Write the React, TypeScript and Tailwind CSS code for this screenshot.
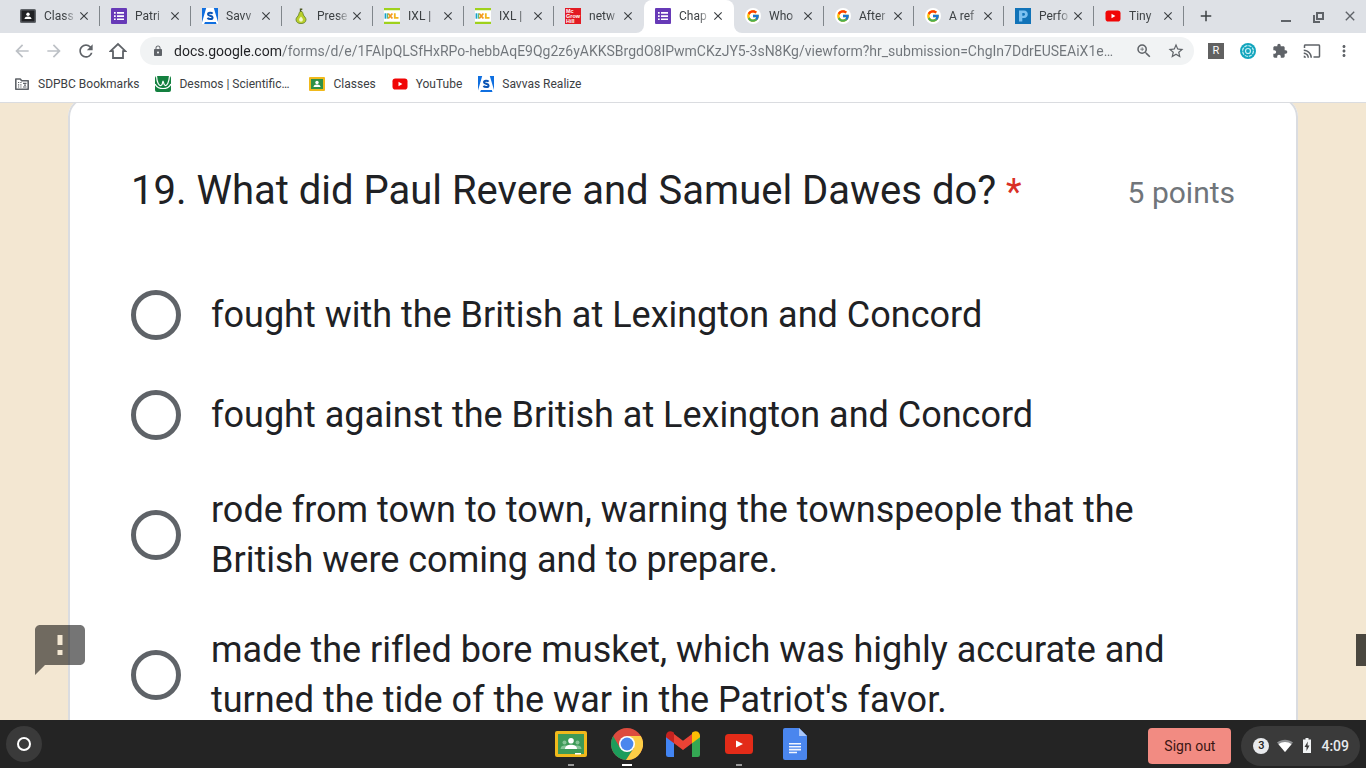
import React, { useState } from "react";
import {
  MdAdd,
  MdArrowBack,
  MdArrowForward,
  MdCast,
  MdClose,
  MdExtension,
  MdLock,
  MdMoreVert,
  MdRefresh,
  MdStarBorder,
  MdZoomIn,
} from "react-icons/md";
import { FcGoogle } from "react-icons/fc";

type IconProps = { className?: string };

function ClassDarkIcon() {
  return (
    <svg viewBox="0 0 16 16" className="size-4 shrink-0">
      <rect y="1" width="16" height="14" rx="1.5" fill="#5f6368" />
      <rect x="1.5" y="2.5" width="13" height="11" fill="#202124" />
      <circle cx="8" cy="6.3" r="1.7" fill="#fff" />
      <path d="M4.5 11c0-1.7 1.6-2.5 3.5-2.5s3.5.8 3.5 2.5z" fill="#fff" />
    </svg>
  );
}

function FormsIcon() {
  return (
    <svg viewBox="0 0 16 16" className="size-4 shrink-0">
      <rect width="16" height="16" rx="1" fill="#673ab7" />
      <path
        d="M3 4h1.7v1.7H3zM6 4h7v1.7H6zM3 7.2h1.7v1.7H3zM6 7.2h7v1.7H6zM3 10.4h1.7v1.7H3zM6 10.4h7v1.7H6z"
        fill="#fff"
      />
    </svg>
  );
}

function SavvasIcon() {
  return (
    <svg viewBox="0 0 16 16" className="size-4 shrink-0">
      <rect width="16" height="16" fill="#0f6fe0" />
      <path d="M4.200 0h7.600L16 14v2h-1.500l-.7-2H3l-.9 2H0v-1.500z" fill="#fff" />
      <path
        d="M10.600 5.700C9.600 4.500 6 4.300 6 6.200c0 1.900 4.600 1 4.600 3.200 0 2.200-3.800 2-5.200.6"
        fill="none"
        stroke="#0b55b5"
        strokeWidth="2"
      />
      <path d="M8 14h6v2H8z" fill="#0f6fe0" />
    </svg>
  );
}

function PearIcon() {
  return (
    <svg viewBox="0 0 16 16" className="size-4 shrink-0">
      <path
        d="M8 3.300c1.800 0 1.900 2.200 2.400 3.700.5 1.400 2.600 2.400 2.600 4.600 0 2.600-2.200 4-5 4s-5-1.400-5-4c0-2.200 2.100-3.200 2.600-4.600.5-1.500.6-3.700 2.400-3.700z"
        fill="#b9cf2c"
        stroke="#5f7d22"
        strokeWidth=".8"
      />
      <path d="M7.500 3.500V1.200h1.800" stroke="#4e5a24" fill="none" strokeWidth="1.400" />
      <path d="M8 8.500c1.200 1.500 1.900 2.200 1.900 3.300a1.900 1.900 0 0 1-3.800 0c0-1.100.7-1.800 1.900-3.300z" fill="#f3f7cf" />
    </svg>
  );
}

function IxlIcon() {
  return (
    <svg viewBox="0 0 16 16" className="size-4 shrink-0">
      <rect width="16" height="16" fill="#fff" />
      <path d="M0 0h16v2.300H0zM0 13.700h16V16H0z" fill="#9fd11c" />
      <path d="M1.500 5.300v5.400" stroke="#16a0c8" strokeWidth="1.800" />
      <path d="m4.200 5.500 4.200 5M8.400 5.500l-4.200 5" stroke="#f39a1e" strokeWidth="1.800" />
      <path d="M10.800 5.300v4.500h3.700" stroke="#f2b51d" strokeWidth="1.800" fill="none" />
      <path d="M3.600 5.300v5.400" stroke="#4fb56b" strokeWidth="1" />
    </svg>
  );
}

function McGrawIcon() {
  return (
    <svg viewBox="0 0 16 16" className="size-4 shrink-0">
      <rect width="16" height="16" fill="#e21a23" />
      <g fill="#fff" fontFamily="Liberation Sans, sans-serif" fontWeight="700" fontSize="5.500">
        <text x="1" y="5">Mc</text>
        <text x="1" y="10">Grow</text>
        <text x="1" y="15">Hill</text>
      </g>
    </svg>
  );
}

function GoogleIcon() {
  return (
    <span className="flex size-4 shrink-0 items-center justify-center rounded-full bg-white">
      <FcGoogle className="size-[14px]" />
    </span>
  );
}

function PIcon() {
  return (
    <svg viewBox="0 0 16 16" className="size-4 shrink-0">
      <rect width="16" height="16" fill="#1173b8" />
      <path d="M4 2.500h5c5 0 5 7.500 0 7.500H7.300v3.500H4z" fill="#7cc0f0" />
      <path d="M7.300 5v2.700h1.400c1.700 0 1.700-2.700 0-2.700z" fill="#1173b8" />
    </svg>
  );
}

function YouTubeIcon({ className = "size-4" }: IconProps) {
  return (
    <svg viewBox="0 0 16 16" className={`${className} shrink-0`}>
      <rect x=".5" y="2.500" width="15" height="11" rx="2.800" fill="#f00505" />
      <path d="M6.500 5.700v4.600L10.400 8z" fill="#fff" />
    </svg>
  );
}

function FolderIcon() {
  return (
    <svg viewBox="0 0 16 16" className="size-4 shrink-0" fill="none" stroke="#5f6368">
      <path d="M1.800 3h4.400l1.500 1.800h6.500v8.400H1.800z" strokeWidth="1.600" strokeLinejoin="round" />
      <path d="M4 6.500h1.200M6.300 6.500h1.200M4 8.800h1.200M6.300 8.800h1.200M4 11h1.200M6.300 11h1.200M9 7.300h3.500M9 11h3.500" strokeWidth="1.200" />
      <path d="M10 9.200h2" strokeWidth="1.200" />
    </svg>
  );
}

function DesmosIcon() {
  return (
    <svg viewBox="0 0 16 16" className="size-4 shrink-0">
      <rect width="16" height="16" rx="2" fill="#13803f" />
      <path
        d="M1.500 0C2 7 4 10 6 9.500S7.500 5 8 5s.6 4.200 2.200 4.500S14 7 14.500 0M0 8c3 6 13 6 16 0"
        fill="none"
        stroke="#fff"
        strokeWidth="1.200"
      />
    </svg>
  );
}

function ClassroomIcon() {
  return (
    <svg viewBox="0 0 32 26" className="w-full">
      <rect width="32" height="26" rx="2" fill="#f0b91c" />
      <rect x="3" y="3" width="26" height="20" fill="#3d9a57" />
      <g fill="#86c497">
        <circle cx="9.500" cy="11.500" r="2" />
        <circle cx="22.500" cy="11.500" r="2" />
        <path d="M5.500 18c0-2.500 2-3.500 4-3.500h13c2 0 4 1 4 3.500z" />
      </g>
      <circle cx="16" cy="9.700" r="2.800" fill="#fff" />
      <path d="M10 18c0-3 3-4.300 6-4.300s6 1.300 6 4.300z" fill="#fff" />
      <path d="M20 22h6v1.500h-6z" fill="#fff" />
    </svg>
  );
}

function SmallClassroomIcon() {
  return (
    <svg viewBox="0 0 16 16" className="size-4 shrink-0">
      <rect y="1" width="16" height="14" rx="1" fill="#f0b91c" />
      <rect x="2" y="3" width="12" height="10" fill="#2f9048" />
      <circle cx="8" cy="6.500" r="1.700" fill="#fff" />
      <path d="M4.500 11c0-1.700 1.600-2.500 3.500-2.500s3.500.8 3.500 2.500z" fill="#fff" />
    </svg>
  );
}

function ChromeIcon() {
  return (
    <svg viewBox="0 0 32 32" className="size-8">
      <circle cx="16" cy="16" r="16" fill="#dd4b3e" />
      <path d="M2.140 8A16 16 0 0 0 15 31.970L22.900 20 16 23.900 9.070 20z" fill="#1c9c5b" />
      <path d="M16 8h13.860A16 16 0 0 1 15 31.970L22.930 20z" fill="#fccd46" />
      <circle cx="16" cy="16" r="8" fill="#fff" />
      <circle cx="16" cy="16" r="6.400" fill="#4a87ee" />
    </svg>
  );
}

function GmailIcon() {
  return (
    <svg viewBox="0 0 34 26" className="w-[34px]">
      <path d="M0 5h8v21H2.300A2.300 2.300 0 0 1 0 23.700z" fill="#4285f4" />
      <path d="M26 5h8v18.700a2.300 2.300 0 0 1-2.300 2.300H26z" fill="#34a853" />
      <path d="m8 3 9 6.800L26 3v9.200L17 19l-9-6.800z" fill="#ea4335" />
      <path d="M0 7.500V4.800C0 .8 4-1 7 1l1 .8v10.400L0 6.200z" fill="#c5221f" />
      <path d="M34 6.200V4.800C34 .8 30-1 27 1l-1 .8v10.400z" fill="#fbbc04" />
    </svg>
  );
}

function ShelfYouTubeIcon() {
  return (
    <svg viewBox="0 0 28 20" className="w-7">
      <rect width="28" height="20" rx="3.500" fill="#e32b18" />
      <path d="M11 6.500v7l7-3.500z" fill="#fff" />
    </svg>
  );
}

function DocsIcon() {
  return (
    <svg viewBox="0 0 24 32" className="h-8">
      <path d="M2 0h14l8 8v22a2 2 0 0 1-2 2H2a2 2 0 0 1-2-2V2a2 2 0 0 1 2-2z" fill="#4a86ee" />
      <path d="m16 0 8 8h-8z" fill="#a9c7fa" />
      <path d="M6 15h12v1.600H6zM6 17.900h12v1.600H6zM6 20.800h12v1.600H6zM6 23.700h8v1.600H6z" fill="#f1f5fe" />
    </svg>
  );
}

const tabs = [
  { title: "Class", icon: <ClassDarkIcon />, width: "w-[91px]" },
  { title: "Patri", icon: <FormsIcon />, width: "w-[91px]" },
  { title: "Savv", icon: <SavvasIcon />, width: "w-[91px]" },
  { title: "Prese", icon: <PearIcon />, width: "w-[91px]" },
  { title: "IXL |", icon: <IxlIcon />, width: "w-[91px]" },
  { title: "IXL |", icon: <IxlIcon />, width: "w-[90px]" },
  { title: "netw", icon: <McGrawIcon />, width: "w-[90px]" },
  { title: "Chap", icon: <FormsIcon />, width: "w-[90px]", active: true },
  { title: "Who", icon: <GoogleIcon />, width: "w-[90px]" },
  { title: "After", icon: <GoogleIcon />, width: "w-[90px]" },
  { title: "A ref", icon: <GoogleIcon />, width: "w-[90px]" },
  { title: "Perfo", icon: <PIcon />, width: "w-[90px]" },
  { title: "Tiny", icon: <YouTubeIcon />, width: "w-[90px]" },
];

function TabStrip() {
  return (
    <header className="flex h-[33px] bg-[#dee1e6]">
      <nav aria-label="Tabs" className="flex min-w-0 pl-[9px]">
        {tabs.map((tab, i) => {
          const beforeActive = tabs[i + 1]?.active;
          const afterActive = tabs[i - 1]?.active;
          const shell = tab.active
            ? "bg-white rounded-t-lg"
            : beforeActive
              ? "bg-[#dee1e6] rounded-br-lg"
              : afterActive
                ? "bg-[#dee1e6] rounded-bl-lg"
                : "bg-[#dee1e6]";
          const backing = tab.active
            ? "bg-[#dee1e6]"
            : beforeActive || afterActive
              ? "bg-[linear-gradient(180deg,#dee1e6_50%,#fff_50%)]"
              : "";
          return (
            <div key={i} className={`flex min-w-0 shrink ${tab.width} ${backing}`}>
              <div className={`flex min-w-0 flex-1 items-center pb-0.5 pl-[11px] ${shell}`}>
                {tab.icon}
                <a
                  href="#tab"
                  className="ml-2 min-w-0 flex-1 whitespace-nowrap text-xs text-[#3c4043] [mask-image:linear-gradient(90deg,#000_60%,transparent)]"
                >
                  {tab.title}
                </a>
                <button aria-label="Close tab" className="mr-2 text-[#3c4043]">
                  <MdClose className="size-[14px]" />
                </button>
                <span
                  className={`h-5 w-px ${tab.active || beforeActive ? "bg-transparent" : "bg-[#80868b]"}`}
                />
              </div>
            </div>
          );
        })}
      </nav>
      <div className="flex flex-1 items-center justify-between pb-0.5 pl-[13px] pr-2 text-[#3c4043]">
        <button aria-label="New tab">
          <MdAdd className="size-[18px]" />
        </button>
        <div className="flex items-center gap-4 text-[#5f6368]">
          <button aria-label="Minimize">
            <svg viewBox="0 0 16 16" className="size-4">
              <path d="M3 13h10" stroke="currentColor" strokeWidth="2" />
            </svg>
          </button>
          <button aria-label="Restore">
            <svg viewBox="0 0 16 16" className="size-4" fill="none" stroke="currentColor" strokeWidth="2">
              <path d="M7 5h6v6H7zM4 7v7h6" />
            </svg>
          </button>
          <button aria-label="Close window">
            <MdClose className="size-4" />
          </button>
        </div>
      </div>
    </header>
  );
}

function ToolButton({ label, children }: { label: string; children: React.ReactNode }) {
  return (
    <button aria-label={label} className="flex w-8 items-center justify-center text-[#5f6368]">
      {children}
    </button>
  );
}

function Toolbar() {
  return (
    <div className="flex h-9 items-center px-1.5">
      <div className="flex">
        <button aria-label="Back" className="flex w-8 justify-center text-[#bdc1c6]">
          <MdArrowBack className="size-5" />
        </button>
        <button aria-label="Forward" className="flex w-8 justify-center text-[#bdc1c6]">
          <MdArrowForward className="size-5" />
        </button>
        <ToolButton label="Reload">
          <MdRefresh className="size-5" />
        </ToolButton>
        <ToolButton label="Home">
          <svg viewBox="0 0 18 18" className="size-[18px]" fill="none" stroke="currentColor" strokeWidth="1.800">
            <path d="M1.500 9.200 9 2l7.500 7.200H14V16H4V9.200z" />
          </svg>
        </ToolButton>
      </div>
      <div className="mx-1.5 flex h-7 min-w-0 flex-1 items-center rounded-full bg-[#f1f3f4] pl-3 pr-0.5">
        <MdLock className="size-3 shrink-0 text-[#5f6368]" />
        <input
          aria-label="Address"
          className="ml-2.5 min-w-0 flex-1 bg-[linear-gradient(90deg,#202124_107px,#70757a_107px)] bg-clip-text text-sm text-transparent outline-none"
          defaultValue="docs.google.com/forms/d/e/1FAIpQLSfHxRPo-hebbAqE9Qg2z6yAKKSBrgdO8IPwmCKzJY5-3sN8Kg/viewform?hr_submission=ChgIn7DdrEUSEAiX1e…"
        />
        <ToolButton label="Zoom">
          <MdZoomIn className="size-[18px]" />
        </ToolButton>
        <ToolButton label="Bookmark this page">
          <MdStarBorder className="size-[18px]" />
        </ToolButton>
      </div>
      <div className="flex">
        <ToolButton label="Extension R">
          <span className="flex size-4 items-center justify-center bg-[#616161] text-[11px] text-white">R</span>
        </ToolButton>
        <ToolButton label="Extension">
          <svg viewBox="0 0 16 16" className="size-4" fill="none">
            <circle cx="8" cy="8" r="8" fill="#12a5bd" />
            <circle cx="8" cy="8" r="5.400" stroke="#c9f0f5" strokeWidth="1.200" strokeDasharray="3.200 1" />
            <circle cx="8" cy="8" r="2.500" stroke="#c9f0f5" strokeWidth="1.200" />
          </svg>
        </ToolButton>
        <ToolButton label="Extensions">
          <MdExtension className="size-4" />
        </ToolButton>
        <ToolButton label="Cast">
          <MdCast className="size-[18px]" />
        </ToolButton>
        <ToolButton label="Menu">
          <MdMoreVert className="size-[18px]" />
        </ToolButton>
      </div>
    </div>
  );
}

const bookmarks = [
  { title: "SDPBC Bookmarks", icon: <FolderIcon />, width: "" },
  { title: "Desmos | Scientific…", icon: <DesmosIcon />, width: "min-w-[138px]" },
  { title: "Classes", icon: <SmallClassroomIcon />, width: "" },
  { title: "YouTube", icon: <YouTubeIcon />, width: "" },
  { title: "Savvas Realize", icon: <SavvasIcon />, width: "" },
];

function BookmarksBar() {
  return (
    <div className="flex h-[34px] items-center gap-4 border-b border-[#dadce0] px-[14px] pb-1">
      {bookmarks.map((b) => (
        <a
          key={b.title}
          href="#bookmark"
          className={`flex items-center gap-2 whitespace-nowrap text-xs text-[#3c4043] ${b.width}`}
        >
          {b.icon}
          {b.title}
        </a>
      ))}
    </div>
  );
}

const options = [
  "fought with the British at Lexington and Concord",
  "fought against the British at Lexington and Concord",
  "rode from town to town, warning the townspeople that the British were coming and to prepare.",
  "made the rifled bore musket, which was highly accurate and turned the tide of the war in the Patriot's favor.",
];

function Question() {
  const [choice, setChoice] = useState<number | null>(null);
  return (
    <fieldset className="mx-[68px] -mt-1.5 rounded-[20px] border-2 border-[#dadce0] bg-white px-[61px] pb-16 pt-[62px]">
      <legend className="float-left flex w-full items-center justify-between leading-[60px]">
        <span className="text-[40px] text-[#202124]">
          19. What did Paul Revere and Samuel Dawes do? <span className="text-4xl text-[#d93025]">*</span>
        </span>
        <span className="pt-1 text-3xl text-[#70757a]">5 points</span>
      </legend>
      <div className="clear-both flex flex-col gap-10 pt-16">
        {options.map((text, i) => (
          <label
            key={text}
            className="flex min-h-[60px] items-center gap-[30px] text-4xl leading-[50px] text-[#202124] [font-variant-ligatures:none]"
          >
            <input
              type="radio"
              name="answer"
              checked={choice === i}
              onChange={() => setChoice(i)}
              className="size-[50px] shrink-0 appearance-none rounded-full border-[5px] border-[#5f6368] checked:border-[#673ab7] checked:bg-[radial-gradient(circle,#673ab7_50%,transparent_52%)]"
            />
            <span>{text}</span>
          </label>
        ))}
      </div>
    </fieldset>
  );
}

const apps = [
  { name: "Classroom", mark: "w-1.5 bg-[#9a9a9a]", icon: <span className="w-8"><ClassroomIcon /></span> },
  { name: "Chrome", mark: "w-2.5 bg-white", icon: <ChromeIcon /> },
  { name: "Gmail", mark: "", icon: <GmailIcon /> },
  { name: "YouTube", mark: "w-1.5 bg-[#9a9a9a]", icon: <ShelfYouTubeIcon /> },
  { name: "Docs", mark: "", icon: <DocsIcon /> },
];

function Shelf() {
  return (
    <footer className="flex h-12 shrink-0 items-center bg-[#242424] px-1.5">
      <div className="flex flex-1">
        <button aria-label="Launcher" className="flex size-9 items-center justify-center rounded-full bg-[#3a3a3a]">
          <span className="size-[14px] rounded-full border-2 border-white" />
        </button>
      </div>
      <div className="flex self-stretch">
        {apps.map((app) => (
          <button key={app.name} aria-label={app.name} className="flex w-14 flex-col items-center">
            <span className="flex h-11 items-end">
              <span className="flex h-10 items-center">{app.icon}</span>
            </span>
            <span className={`h-0.5 ${app.mark}`} />
          </button>
        ))}
      </div>
      <div className="flex flex-1 items-center justify-end gap-2.5">
        <button className="mt-1 h-9 rounded bg-[#f28b82] px-4 text-sm text-[#3b1613]">Sign out</button>
        <button className="mt-1 flex h-10 items-center gap-2 rounded-full bg-[#3a3a3a] pl-3 pr-[11px] text-sm font-medium text-[#e8eaed]">
          <span className="flex size-4 items-center justify-center rounded-full bg-[#e8eaed] text-[11px] text-[#242424]">3</span>
          <svg viewBox="0 0 16 16" className="size-4">
            <path d="M0 4.500C5 .8 11 .8 16 4.500L8 14z" fill="#8d8f91" />
            <path d="M1.500 6.300c4-3 9-3 13 0L8 14z" fill="#fff" />
          </svg>
          <svg viewBox="0 0 8 16" className="h-4 w-3">
            <path d="M2.500 0h3v1.500H8V15H0V1.500h2.500z" fill="#f1f3f4" />
            <path d="M4.800 3.500 1.500 9h2v4l3-5.500h-2z" fill="#3a3a3a" />
          </svg>
          <span>4:09</span>
        </button>
      </div>
    </footer>
  );
}

export default function App() {
  return (
    <div className="flex h-screen flex-col overflow-hidden bg-white font-[Roboto,sans-serif]">
      <TabStrip />
      <Toolbar />
      <BookmarksBar />
      <main className="relative min-h-0 flex-1 overflow-hidden bg-[#f3e7d2]">
        <Question />
        <button aria-label="Report a problem" className="absolute bottom-10 left-[30px] text-black/54">
          <svg viewBox="0 0 24 24" className="size-[60px]" fill="currentColor">
            <path
              fillRule="evenodd"
              d="M20 2H4c-1.100 0-2 .9-2 2v18l4-4h14c1.100 0 2-.9 2-2V4c0-1.100-.9-2-2-2zm-7 12h-2v-2h2v2zm0-4h-2V6h2v4z"
            />
          </svg>
        </button>
        <div className="absolute bottom-[54px] right-0 h-8 w-2.5 bg-[#4a473f]" />
      </main>
      <Shelf />
    </div>
  );
}
